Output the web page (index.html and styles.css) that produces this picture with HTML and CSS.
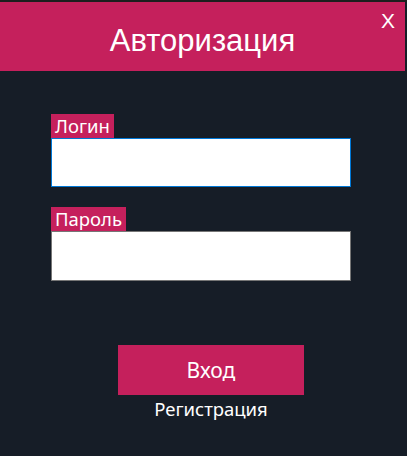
FILE: index.html
```html
<!DOCTYPE html>
<html lang="ru">
<head>
<meta charset="utf-8">
<title>Авторизация</title>
<link rel="stylesheet" href="styles.css">
</head>
<body>
<div class="topline"></div>
<header class="header">
  <h1 class="title">Авторизация</h1>
  <span class="close">X</span>
</header>
<main class="form">
  <div class="field field-login">
    <label class="label">Логин</label>
    <div class="input input-focus"></div>
  </div>
  <div class="field field-pass">
    <label class="label">Пароль</label>
    <div class="input"></div>
  </div>
  <div class="actions">
    <div class="btn">Вход</div>
    <div class="reg">Регистрация</div>
  </div>
</main>
</body>
</html>
```
FILE: styles.css
```css
html, body {
  margin: 0;
  padding: 0;
}
body {
  width: 407px;
  height: 456px;
  background: #161d27;
  overflow: hidden;
  font-family: "Liberation Sans", Arial, sans-serif;
  color: #fff;
}
.topline {
  height: 2px;
  background: #1e1e1e;
}
.header {
  position: relative;
  width: 405px;
  height: 69px;
  background: #c5205c;
  display: flex;
  align-items: center;
  justify-content: center;
}
.title {
  margin: 0;
  font-weight: normal;
  font-size: 31px;
  line-height: 1;
  padding-top: 7px;
}
.close {
  position: absolute;
  left: 381px;
  top: 8px;
  font-size: 21px;
  line-height: 1;
}
.form {
  display: flex;
  flex-direction: column;
  padding-left: 51px;
}
.field {
  display: flex;
  flex-direction: column;
  align-items: flex-start;
}
.field-login { margin-top: 43px; }
.field-pass { margin-top: 20px; }
.label {
  background: #c5205c;
  height: 24px;
  padding: 0 4px;
  font-family: "Noto Sans", "Open Sans", sans-serif;
  font-size: 18.5px;
  line-height: 24px;
  box-sizing: border-box;
}
.input {
  width: 300px;
  height: 50px;
  box-sizing: border-box;
  background: #fff;
  border: 1px solid #767676;
}
.input-focus {
  height: 49px;
  border-color: #0078d7;
}
.actions {
  margin-top: 64px;
  margin-left: 67px;
  display: flex;
  flex-direction: column;
  align-items: center;
  width: 186px;
}
.btn {
  width: 186px;
  height: 50px;
  background: #c5205c;
  display: flex;
  align-items: center;
  justify-content: center;
  font-size: 21px;
  font-family: "Noto Sans", "Open Sans", sans-serif;
}
.reg {
  margin-top: 3px;
  font-size: 18.5px;
  font-family: "Noto Sans", "Open Sans", sans-serif;
  line-height: 22px;
}
```
